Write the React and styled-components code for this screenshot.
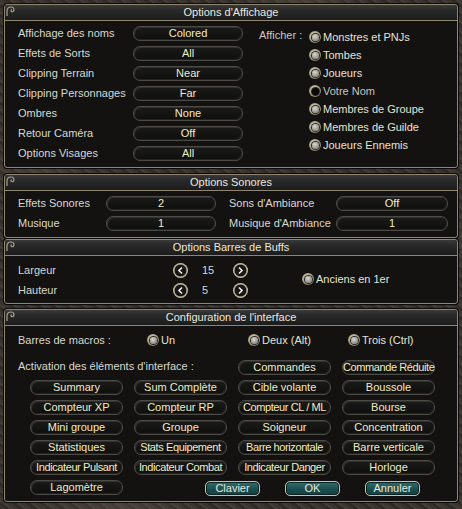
import React from "react";
import styled, { createGlobalStyle } from "styled-components";

const Global = createGlobalStyle`
  html, body { margin: 0; padding: 0; background: #2e2a26; }
  body { font-family: "Liberation Sans", Arial, sans-serif; }
`;

const Page = styled.div`
  width: 462px;
  height: 509px;
  box-sizing: border-box;
  padding: 4px 4px 0 4px;
  display: flex;
  flex-direction: column;
  overflow: hidden;
  background:
    radial-gradient(ellipse 60px 30px at 40px 170px, rgba(90,80,70,0.5), transparent),
    radial-gradient(ellipse 80px 40px at 420px 240px, rgba(80,72,62,0.5), transparent),
    radial-gradient(ellipse 90px 40px at 120px 505px, rgba(95,85,75,0.45), transparent),
    radial-gradient(ellipse 70px 30px at 300px 2px, rgba(95,85,75,0.45), transparent),
    repeating-linear-gradient(35deg, #3a3530 0 3px, #2f2b27 3px 6px, #433d36 6px 8px),
    #36312c;
`;

const Panel = styled.section`
  position: relative;
  box-sizing: border-box;
  height: ${(p) => p.$h}px;
  margin-top: ${(p) => p.$mt || 0}px;
  border: 1px solid #8e8670;
  border-radius: 3px;
  background: #131211;
  box-shadow: 0 0 0 1px #0b0a09;
  display: flex;
  flex-direction: column;
`;

const TitleBar = styled.div`
  height: 16px;
  flex: none;
  box-sizing: border-box;
  border-bottom: 1px solid #8e8670;
  border-top-right-radius: 3px;
  background: linear-gradient(#3a3a3a 0%, #2a2a2a 30%, #1c1c1c 100%);
  color: #ece8dc;
  font-size: 11px;
  line-height: 15px;
  text-align: center;
`;

const Curl = styled.svg`
  position: absolute;
  left: 1px;
  top: 1px;
`;

const Label = styled.div`
  color: #d8d8d0;
  font-size: 11px;
  white-space: nowrap;
  display: flex;
  align-items: center;
  height: ${(p) => p.$h || 20}px;
`;

const SideLabel = styled(Label)`
  padding-left: 13px;
`;

const PillButton = styled.div`
  box-sizing: border-box;
  height: 15px;
  width: ${(p) => p.$w || 110}px;
  align-self: center;
  border: 1px solid #4c4a45;
  border-radius: 7px;
  background: linear-gradient(#1a1a19, #0e0e0d);
  box-shadow: inset 1px 1px 0 #34322e, inset -1px -1px 0 #22211e;
  color: #f2ebc6;
  font-size: 11px;
  line-height: 13px;
  text-align: center;
  white-space: nowrap;
  letter-spacing: ${(p) => p.$ls || 0}px;
`;

const TealButton = styled.div`
  box-sizing: border-box;
  width: 55px;
  height: 15px;
  border: 1px solid #c9c1a3;
  border-radius: 5px;
  background: linear-gradient(#2e6f6f, #1a4b4c 60%, #164142);
  box-shadow: inset 0 0 0 1px #0c2426;
  color: #e9e7dc;
  font-size: 11px;
  line-height: 13px;
  text-align: center;
`;

const RadioDot = styled.span`
  box-sizing: border-box;
  width: 12px;
  height: 12px;
  flex: none;
  border-radius: 50%;
  background: radial-gradient(circle at 45% 40%, #efe8d2, #9c9279 60%, #5f5848);
  display: flex;
  align-items: center;
  justify-content: center;
  &::after {
    content: "";
    width: 7px;
    height: 7px;
    border-radius: 50%;
    background: ${(p) =>
      p.$on
        ? "radial-gradient(circle at 40% 35%, #d8d8d4, #8c8c88 70%, #5a5a56)"
        : "#060606"};
    box-shadow: 0 0 0 1px #2a2620;
  }
`;

const RadioRow = styled.div`
  display: flex;
  align-items: center;
  gap: 2px;
  height: ${(p) => p.$h || 18}px;
  color: ${(p) => (p.$on === false ? "#c6c6be" : "#e6e2d4")};
  font-size: 11px;
  white-space: nowrap;
`;

const Radio = ({ on = true, children, h }) => (
  <RadioRow $on={on} $h={h}>
    <RadioDot $on={on} />
    <span>{children}</span>
  </RadioRow>
);

/* ---- Panel 1 ---- */
const P1Body = styled.div`
  display: flex;
  padding: 2px 0 0 13px;
`;
const LabelButtonGrid = styled.div`
  display: grid;
  grid-template-columns: ${(p) => p.$cols};
  grid-auto-rows: 20px;
`;
const AfficherArea = styled.div`
  display: flex;
  margin-left: 16px;
  padding-top: 5px;
`;
const AfficherLabel = styled.div`
  width: 50px;
  height: 12px;
  line-height: 12px;
  padding-top: 1px;
  color: #c8c8c0;
  font-size: 11px;
`;
const RadioList = styled.div`
  display: flex;
  flex-direction: column;
`;

/* ---- Panel 2 ---- */
const P2Body = styled.div`
  padding: 2px 0 0 13px;
`;

/* ---- Panel 3 ---- */
const P3Body = styled.div`
  display: flex;
  padding: 4px 0 0 13px;
`;
const BuffGrid = styled.div`
  display: grid;
  grid-template-columns: 155px 15px 45px 15px;
  grid-auto-rows: 20px;
  align-items: center;
`;
const Arrow = styled.span`
  box-sizing: border-box;
  width: 15px;
  height: 15px;
  border-radius: 50%;
  background: radial-gradient(circle, #161616 52%, #a39a82 58%, #d3cab0 70%, #7b735f 100%);
  display: flex;
  align-items: center;
  justify-content: center;
`;
const Value = styled.span`
  color: #d8d8d0;
  font-size: 11px;
  padding-left: 14px;
`;
const AnciensArea = styled.div`
  margin-left: 54px;
  display: flex;
  align-items: center;
  height: 40px;
  margin-top: -1px;
`;

/* ---- Panel 4 ---- */
const P4Body = styled.div`
  padding: 4px 0 0 13px;
`;
const MacroRow = styled.div`
  display: grid;
  grid-template-columns: 129px 101px 100px auto;
  height: 20px;
  align-items: center;
`;
const ElemGrid = styled.div`
  margin-top: 7px;
  margin-left: 12px;
  display: grid;
  grid-template-columns: repeat(4, 93px);
  column-gap: 11px;
  grid-auto-rows: 20px;
  align-items: center;
`;
const ActivationLabel = styled(Label)`
  grid-column: 1 / 3;
  margin-left: -12px;
  margin-top: -2px;
`;
const Footer = styled.div`
  grid-column: 2 / 5;
  display: flex;
  gap: 25px;
  padding-left: 71px;
  padding-top: 3px;
`;

const CurlIcon = () => (
  <Curl width="12" height="10" viewBox="0 0 12 10">
    <path
      d="M1 10 V5 C1 2 3 1 5 1 C7 1 8 2.5 8 4 C8 5.5 6.5 6 5.5 5.5 C4.5 5 5 3.5 6 3.8"
      fill="none"
      stroke="#a89f86"
      strokeWidth="1.2"
    />
  </Curl>
);

const Chevron = ({ left }) => (
  <svg width="9" height="9" viewBox="0 0 9 9">
    <path
      d={left ? "M6 1.5 L3 4.5 L6 7.5" : "M3 1.5 L6 4.5 L3 7.5"}
      fill="none"
      stroke="#f2f2ee"
      strokeWidth="1.6"
    />
  </svg>
);

const displayRows = [
  ["Affichage des noms", "Colored"],
  ["Effets de Sorts", "All"],
  ["Clipping Terrain", "Near"],
  ["Clipping Personnages", "Far"],
  ["Ombres", "None"],
  ["Retour Caméra", "Off"],
  ["Options Visages", "All"],
];

const afficher = [
  ["Monstres et PNJs", true],
  ["Tombes", true],
  ["Joueurs", true],
  ["Votre Nom", false],
  ["Membres de Groupe", true],
  ["Membres de Guilde", true],
  ["Joueurs Ennemis", true],
];

const elements = [
  "Summary", "Sum Complète", "Cible volante", "Boussole",
  "Compteur XP", "Compteur RP", "Compteur CL / ML", "Bourse",
  "Mini groupe", "Groupe", "Soigneur", "Concentration",
  "Statistiques", "Stats Equipement", "Barre horizontale", "Barre verticale",
  "Indicateur Pulsant", "Indicateur Combat", "Indicateur Danger", "Horloge",
];

const tight = (t) => (t.length > 15 ? -0.4 : 0);

export default function App() {
  return (
    <>
      <Global />
      <Page>
        <Panel $h={164}>
          <TitleBar>Options d'Affichage</TitleBar>
          <CurlIcon />
          <P1Body>
            <LabelButtonGrid $cols="115px 110px">
              {displayRows.map(([l, v]) => (
                <React.Fragment key={l}>
                  <Label>{l}</Label>
                  <PillButton>{v}</PillButton>
                </React.Fragment>
              ))}
            </LabelButtonGrid>
            <AfficherArea>
              <AfficherLabel>Afficher :</AfficherLabel>
              <RadioList>
                {afficher.map(([l, on]) => (
                  <Radio key={l} on={on}>
                    {l}
                  </Radio>
                ))}
              </RadioList>
            </AfficherArea>
          </P1Body>
        </Panel>

        <Panel $h={64} $mt={6}>
          <TitleBar>Options Sonores</TitleBar>
          <CurlIcon />
          <P2Body>
            <LabelButtonGrid $cols="88px 110px 120px 112px">
              <Label>Effets Sonores</Label>
              <PillButton>2</PillButton>
              <SideLabel>Sons d'Ambiance</SideLabel>
              <PillButton $w={112}>Off</PillButton>
              <Label>Musique</Label>
              <PillButton>1</PillButton>
              <SideLabel>Musique d'Ambiance</SideLabel>
              <PillButton $w={112}>1</PillButton>
            </LabelButtonGrid>
          </P2Body>
        </Panel>

        <Panel $h={65} $mt={1}>
          <TitleBar>Options Barres de Buffs</TitleBar>
          <CurlIcon />
          <P3Body>
            <BuffGrid>
              <Label>Largeur</Label>
              <Arrow><Chevron left /></Arrow>
              <Value>15</Value>
              <Arrow><Chevron /></Arrow>
              <Label>Hauteur</Label>
              <Arrow><Chevron left /></Arrow>
              <Value>5</Value>
              <Arrow><Chevron /></Arrow>
            </BuffGrid>
            <AnciensArea>
              <Radio>Anciens en 1er</Radio>
            </AnciensArea>
          </P3Body>
        </Panel>

        <Panel $h={193} $mt={5}>
          <TitleBar>Configuration de l'interface</TitleBar>
          <CurlIcon />
          <P4Body>
            <MacroRow>
              <Label>Barres de macros :</Label>
              <Radio>Un</Radio>
              <Radio>Deux (Alt)</Radio>
              <Radio>Trois (Ctrl)</Radio>
            </MacroRow>
            <ElemGrid>
              <ActivationLabel>Activation des éléments d'interface :</ActivationLabel>
              <PillButton $w={93}>Commandes</PillButton>
              <PillButton $w={93} $ls={-0.4}>Commande Réduite</PillButton>
              {elements.map((e) => (
                <PillButton key={e} $w={93} $ls={tight(e)}>
                  {e}
                </PillButton>
              ))}
              <PillButton $w={93}>Lagomètre</PillButton>
              <Footer>
                <TealButton>Clavier</TealButton>
                <TealButton>OK</TealButton>
                <TealButton>Annuler</TealButton>
              </Footer>
            </ElemGrid>
          </P4Body>
        </Panel>
      </Page>
    </>
  );
}
